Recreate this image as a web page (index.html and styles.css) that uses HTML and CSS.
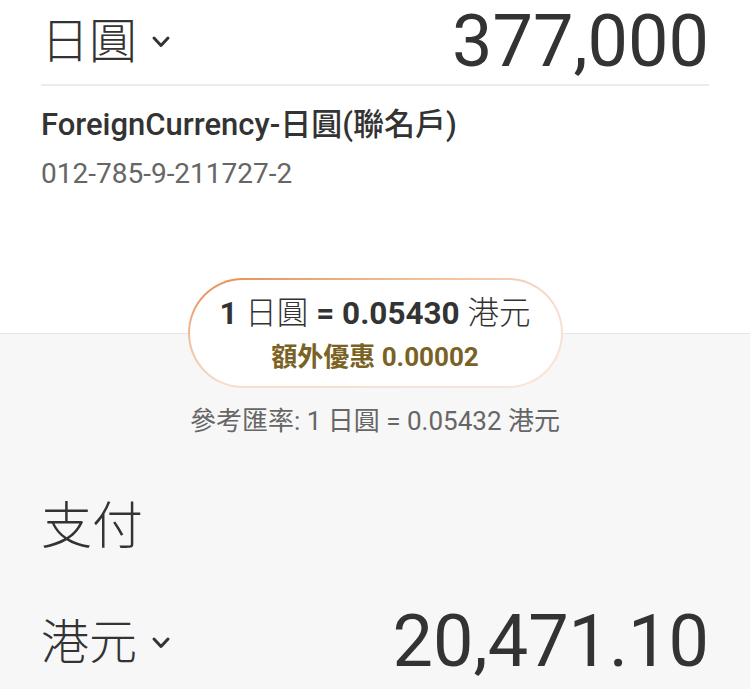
FILE: index.html
```html
<!DOCTYPE html>
<html lang="zh-Hant">
<head>
<meta charset="utf-8">
<title>Exchange</title>
<link rel="stylesheet" href="styles.css">
</head>
<body>
<div class="screen">
  <section class="top">
    <div class="amount-row">
      <div class="currency">
        <span class="currency-name">日圓</span>
        <svg class="chevron" width="20" height="14" viewBox="0 0 20 14"><polyline points="3,3 10,10.5 17,3" fill="none" stroke="#333" stroke-width="3" stroke-linecap="round" stroke-linejoin="round"/></svg>
      </div>
      <div class="amount">377,000</div>
    </div>
    <div class="account-name">ForeignCurrency-日圓(聯名戶)</div>
    <div class="account-no">012-785-9-211727-2</div>
  </section>
  <section class="bottom">
    <div class="rate-wrap">
      <div class="rate-pill">
        <div class="rate-main">1 <span class="cjk-light">日圓</span> = 0.05430 <span class="cjk-light">港元</span></div>
        <div class="rate-bonus">額外優惠 0.00002</div>
      </div>
    </div>
    <div class="rate-ref">參考匯率: 1 日圓 = 0.05432 港元</div>
    <div class="pay-label">支付</div>
    <div class="amount-row pay-row">
      <div class="currency">
        <span class="currency-name">港元</span>
        <svg class="chevron" width="20" height="14" viewBox="0 0 20 14"><polyline points="3,3 10,10.5 17,3" fill="none" stroke="#333" stroke-width="3" stroke-linecap="round" stroke-linejoin="round"/></svg>
      </div>
      <div class="amount">20,471.10</div>
    </div>
  </section>
</div>
</body>
</html>
```
FILE: styles.css
```css
* { box-sizing: border-box; }
html, body {
  margin: 0;
  padding: 0;
  height: 689px;
  overflow: hidden;
}
body {
  font-family: Roboto, "Noto Sans CJK TC", "Noto Sans", sans-serif;
  color: #333333;
  background: #f7f7f7;
}
.screen {
  width: 750px;
}
.top {
  background: #ffffff;
  height: 333px;
  padding: 0 41px;
}
.amount-row {
  display: flex;
  align-items: center;
  justify-content: space-between;
  height: 86px;
  border-bottom: 2px solid #ebebeb;
}
.currency {
  display: flex;
  align-items: center;
  gap: 14px;
}
.currency-name {
  font-size: 48px;
  line-height: 56px;
  font-weight: 300;
}
.chevron {
  display: block;
}
.amount {
  font-size: 72px;
  line-height: 84px;
  align-self: flex-start;
}
.account-name {
  margin-top: 21px;
  font-size: 31px;
  line-height: 36px;
  font-weight: 500;
  color: #333;
}
.account-no {
  margin-top: 14px;
  font-size: 28px;
  line-height: 34px;
  color: #666;
}
.bottom {
  border-top: 1px solid #e6e6e6;
  padding: 0 41px;
}
.rate-wrap {
  display: flex;
  justify-content: center;
  margin-top: -56px;
}
.rate-pill {
  width: 375px;
  height: 110px;
  border-radius: 55px;
  border: 2px solid transparent;
  background:
    linear-gradient(#fff, #fff) padding-box,
    linear-gradient(165deg, #e8874a 0%, #f0c09c 30%, #f7dccb 55%, #f9e6da 100%) border-box;
  display: flex;
  flex-direction: column;
  align-items: center;
  padding-top: 15px;
}
.rate-main {
  font-size: 31.5px;
  line-height: 38px;
  font-weight: 700;
  color: #333;
}
.cjk-light {
  font-weight: 300;
}
.rate-bonus {
  margin-top: 9px;
  font-size: 26px;
  line-height: 30px;
  font-weight: 700;
  color: #7a6224;
}
.rate-ref {
  margin-top: 18px;
  text-align: center;
  font-size: 26px;
  line-height: 30px;
  color: #666;
}
.pay-label {
  margin-top: 62px;
  font-size: 51px;
  line-height: 58px;
  font-weight: 300;
}
.pay-row {
  margin-top: 44px;
  border-bottom: none;
}
```
